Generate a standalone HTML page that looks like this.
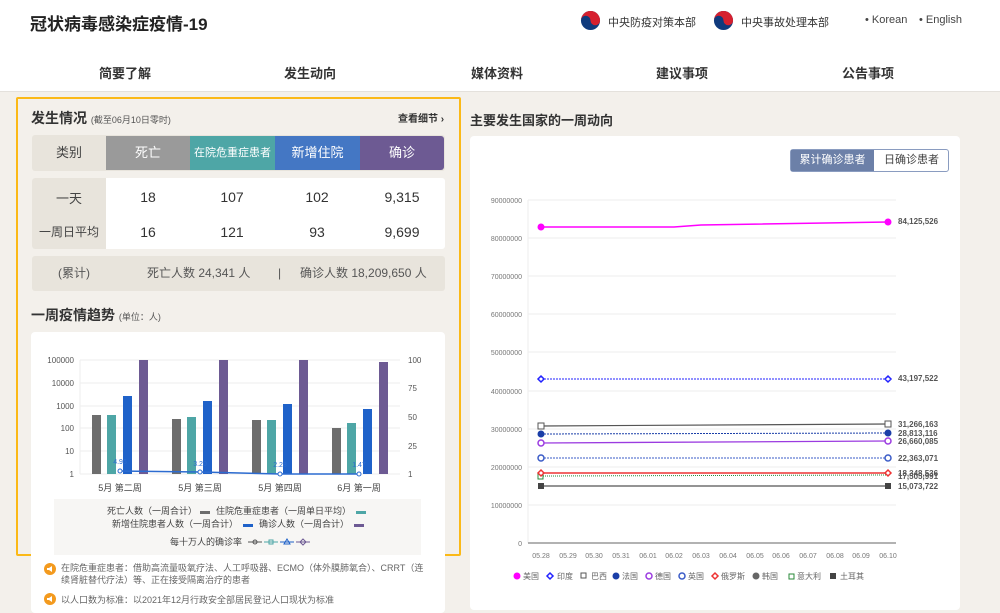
<!DOCTYPE html>
<html><head><meta charset="utf-8"><style>
*{margin:0;padding:0;box-sizing:border-box}
body{width:1000px;height:613px;overflow:hidden;background:#f3f0eb;font-family:"Liberation Sans","Noto Sans CJK SC",sans-serif;color:#333;position:relative}
.a{position:absolute}
.hdr{left:0;top:0;width:1000px;height:92px;background:#fff;border-bottom:1px solid #e4e1dc}
.nav{top:63px;font-size:13px;font-weight:bold;color:#333;transform:translateX(-50%)}
.th{top:136px;height:34px;line-height:34px;text-align:center;color:#fff;font-size:13px}
.num{font-size:14px;text-align:center;width:84px}
</style></head><body>
<div class="a hdr"></div>
<div class="a" style="left:30px;top:10px;font-size:17px;font-weight:bold;color:#222">冠状病毒感染症疫情-19</div>
<svg class="a" style="left:580px;top:10px" width="21" height="21" viewBox="0 0 22 22"><circle cx="11" cy="11" r="10" fill="#0f3a7d"/><path d="M1 11A10 10 0 0 1 21 11A5 5 0 0 1 11 11A5 5 0 0 0 1 11Z" fill="#d6202f"/></svg>
<div class="a" style="left:608px;top:14px;font-size:11px;color:#333">中央防疫对策本部</div>
<svg class="a" style="left:713px;top:10px" width="21" height="21" viewBox="0 0 22 22"><circle cx="11" cy="11" r="10" fill="#0f3a7d"/><path d="M1 11A10 10 0 0 1 21 11A5 5 0 0 1 11 11A5 5 0 0 0 1 11Z" fill="#d6202f"/></svg>
<div class="a" style="left:741px;top:14px;font-size:11px;color:#333">中央事故处理本部</div>
<div class="a" style="left:865px;top:14px;font-size:11px;color:#444">• Korean</div>
<div class="a" style="left:919px;top:14px;font-size:11px;color:#444">• English</div>
<div class="a nav" style="left:125px">简要了解</div>
<div class="a nav" style="left:310px">发生动向</div>
<div class="a nav" style="left:497px">媒体资料</div>
<div class="a nav" style="left:682px">建议事项</div>
<div class="a nav" style="left:868px">公告事项</div>

<div class="a" style="left:16px;top:97px;width:445px;height:459px;border:2px solid #fbb917;border-radius:2px"></div>
<div class="a" style="left:31px;top:108px;font-size:14px;font-weight:bold;color:#333">发生情况 <span style="font-size:9px;font-weight:normal;color:#555">(截至06月10日零时)</span></div>
<div class="a" style="left:398px;top:110px;font-size:10px;font-weight:bold;color:#333">查看细节 ›</div>
<div class="a" style="left:32px;top:135px;width:413px;height:36px;background:#e8e4dc;border-radius:3px"></div>
<div class="a th" style="left:32px;width:74px;color:#444">类别</div>
<div class="a th" style="left:106px;width:84px;background:#9a9a9a">死亡</div>
<div class="a th" style="left:190px;width:85px;background:#4ea6a6;font-size:11px">在院危重症患者</div>
<div class="a th" style="left:275px;width:85px;background:#4477c4">新增住院</div>
<div class="a th" style="left:360px;width:84px;background:#6d5a93;border-radius:0 3px 3px 0">确诊</div>
<div class="a" style="left:32px;top:178px;width:413px;height:71px;background:#fff;border-radius:3px"></div>
<div class="a" style="left:32px;top:178px;width:74px;height:71px;background:#e8e4dc;border-radius:3px 0 0 3px"></div>
<div class="a" style="left:32px;top:188px;width:74px;text-align:center;font-size:13px;color:#444">一天</div>
<div class="a" style="left:32px;top:223px;width:74px;text-align:center;font-size:12px;color:#444">一周日平均</div>
<div class="a num" style="left:106px;top:189px">18</div><div class="a num" style="left:190px;top:189px">107</div><div class="a num" style="left:275px;top:189px">102</div><div class="a num" style="left:360px;top:189px">9,315</div>
<div class="a num" style="left:106px;top:224px">16</div><div class="a num" style="left:190px;top:224px">121</div><div class="a num" style="left:275px;top:224px">93</div><div class="a num" style="left:360px;top:224px">9,699</div>
<div class="a" style="left:32px;top:256px;width:413px;height:35px;background:#e8e4dc;border-radius:3px;font-size:12px;color:#555;line-height:35px"><span class="a" style="left:26px">(累计)</span><span class="a" style="left:115px">死亡人数 24,341 人</span><span class="a" style="left:246px">|</span><span class="a" style="left:268px">确诊人数 18,209,650 人</span></div>
<div class="a" style="left:31px;top:305px;font-size:14px;font-weight:bold;color:#333">一周疫情趋势 <span style="font-size:9px;font-weight:normal;color:#555">(单位：人)</span></div>
<div class="a" style="left:31px;top:332px;width:414px;height:281px;background:#fff;border-radius:4px"></div>
<svg class="a" style="left:0;top:340px" width="470" height="215" viewBox="0 340 470 215" font-family="Liberation Sans" font-size="8" fill="#555">
<g stroke="#eee"><line x1="80" y1="360" x2="400" y2="360"/><line x1="80" y1="383" x2="400" y2="383"/><line x1="80" y1="406" x2="400" y2="406"/><line x1="80" y1="428" x2="400" y2="428"/><line x1="80" y1="451" x2="400" y2="451"/><line x1="80" y1="474" x2="400" y2="474"/><line x1="80" y1="360" x2="80" y2="474"/></g>
<g text-anchor="end"><text x="74" y="363">100000</text><text x="74" y="386">10000</text><text x="74" y="409">1000</text><text x="74" y="431">100</text><text x="74" y="454">10</text><text x="74" y="477">1</text></g>
<g><text x="408" y="363">100</text><text x="408" y="391">75</text><text x="408" y="420">50</text><text x="408" y="449">25</text><text x="408" y="477">1</text></g>
<g fill="#6d6d6d"><rect x="92" y="415" width="9" height="59"/><rect x="172" y="419" width="9" height="55"/><rect x="252" y="420" width="9" height="54"/><rect x="332" y="428" width="9" height="46"/></g>
<g fill="#4ea6a6"><rect x="107" y="415" width="9" height="59"/><rect x="187" y="417" width="9" height="57"/><rect x="267" y="420" width="9" height="54"/><rect x="347" y="423" width="9" height="51"/></g>
<g fill="#1f62c9"><rect x="123" y="396" width="9" height="78"/><rect x="203" y="401" width="9" height="73"/><rect x="283" y="404" width="9" height="70"/><rect x="363" y="409" width="9" height="65"/></g>
<g fill="#6d5a93"><rect x="139" y="360" width="9" height="114"/><rect x="219" y="360" width="9" height="114"/><rect x="299" y="360" width="9" height="114"/><rect x="379" y="362" width="9" height="112"/></g>
<polyline points="120,471 200,472 280,474 359,474" fill="none" stroke="#2c6bd0" stroke-width="1.5"/>
<g fill="#fff" stroke="#2c6bd0"><circle cx="120" cy="471" r="2"/><circle cx="200" cy="472" r="2"/><circle cx="280" cy="474" r="2"/><circle cx="359" cy="474" r="2"/></g>
<g font-size="7" fill="#2c6bd0" text-anchor="middle"><text x="120" y="464">4.96</text><text x="200" y="466">3.20</text><text x="280" y="467">2.28</text><text x="359" y="467">1.47</text></g>
<g font-size="9" fill="#444" text-anchor="middle"><text x="120" y="491">5月 第二周</text><text x="200" y="491">5月 第三周</text><text x="280" y="491">5月 第四周</text><text x="359" y="491">6月 第一周</text></g>
<rect x="54" y="499" width="367" height="56" fill="#f7f6f4"/>
<g font-size="9" fill="#444"><text x="107" y="514">死亡人数（一周合计）</text><rect x="200" y="511" width="10" height="3" fill="#6d6d6d"/><text x="216" y="514">住院危重症患者（一周单日平均）</text><rect x="356" y="511" width="10" height="3" fill="#4ea6a6"/>
<text x="112" y="527">新增住院患者人数（一周合计）</text><rect x="243" y="524" width="10" height="3" fill="#1f62c9"/><text x="259" y="527">确诊人数（一周合计）</text><rect x="354" y="524" width="10" height="3" fill="#6d5a93"/>
<text x="170" y="545">每十万人的确诊率</text></g>
<g fill="none"><line x1="248" y1="542" x2="262" y2="542" stroke="#555"/><circle cx="255" cy="542" r="2" stroke="#555"/><line x1="264" y1="542" x2="278" y2="542" stroke="#4ea6a6"/><rect x="269" y="540" width="4" height="4" stroke="#4ea6a6"/><line x1="280" y1="542" x2="294" y2="542" stroke="#1f62c9"/><path d="M287 539L290 544H284Z" stroke="#1f62c9"/><line x1="296" y1="542" x2="310" y2="542" stroke="#6d5a93"/><path d="M303 539L306 542L303 545L300 542Z" stroke="#6d5a93"/></g>
</svg>
<svg class="a" style="left:44px;top:563px" width="12" height="12"><circle cx="6" cy="6" r="6" fill="#f39a1e"/><path d="M3 5h2l3-2v6l-3-2H3z" fill="#fff"/></svg>
<div class="a" style="left:61px;top:562px;width:370px;font-size:9px;line-height:12px;color:#666">在院危重症患者：借助高流量吸氧疗法、人工呼吸器、ECMO（体外膜肺氧合）、CRRT（连续肾脏替代疗法）等、正在接受隔离治疗的患者</div>
<svg class="a" style="left:44px;top:593px" width="12" height="12"><circle cx="6" cy="6" r="6" fill="#f39a1e"/><path d="M3 5h2l3-2v6l-3-2H3z" fill="#fff"/></svg>
<div class="a" style="left:61px;top:593px;font-size:9px;color:#666">以人口数为标准：以2021年12月行政安全部居民登记人口现状为标准</div>

<div class="a" style="left:470px;top:110px;font-size:13px;font-weight:bold;color:#333">主要发生国家的一周动向</div>
<div class="a" style="left:470px;top:136px;width:490px;height:474px;background:#fff;border-radius:4px"></div>
<div class="a" style="left:790px;top:149px;width:159px;height:23px;border:1px solid #8a9cc0;border-radius:3px;font-size:11px;line-height:21px"><span class="a" style="left:0;width:83px;height:21px;background:#6c80a8;color:#fff;text-align:center">累计确诊患者</span><span class="a" style="left:83px;width:75px;text-align:center;color:#444">日确诊患者</span></div>
<svg class="a" style="left:470px;top:190px" width="490" height="400" viewBox="470 190 490 400" font-family="Liberation Sans" font-size="7" fill="#777">
<g stroke="#eee"><line x1="528" y1="200" x2="896" y2="200"/><line x1="528" y1="238" x2="896" y2="238"/><line x1="528" y1="276" x2="896" y2="276"/><line x1="528" y1="314" x2="896" y2="314"/><line x1="528" y1="352" x2="896" y2="352"/><line x1="528" y1="391" x2="896" y2="391"/><line x1="528" y1="429" x2="896" y2="429"/><line x1="528" y1="467" x2="896" y2="467"/><line x1="528" y1="505" x2="896" y2="505"/><line x1="528" y1="200" x2="528" y2="543"/></g>
<line x1="528" y1="543" x2="896" y2="543" stroke="#999" stroke-width="1.5"/>
<g text-anchor="end"><text x="522" y="203">90000000</text><text x="522" y="241">80000000</text><text x="522" y="279">70000000</text><text x="522" y="317">60000000</text><text x="522" y="355">50000000</text><text x="522" y="394">40000000</text><text x="522" y="432">30000000</text><text x="522" y="470">20000000</text><text x="522" y="508">10000000</text><text x="522" y="546">0</text></g>
<g text-anchor="middle"><text x="541" y="558">05.28</text><text x="568" y="558">05.29</text><text x="594" y="558">05.30</text><text x="621" y="558">05.31</text><text x="648" y="558">06.01</text><text x="674" y="558">06.02</text><text x="701" y="558">06.03</text><text x="728" y="558">06.04</text><text x="755" y="558">06.05</text><text x="781" y="558">06.06</text><text x="808" y="558">06.07</text><text x="835" y="558">06.08</text><text x="861" y="558">06.09</text><text x="888" y="558">06.10</text></g>
<path d="M541 227L674 227L701 225L888 222" stroke="#f0f" stroke-width="1.5" fill="none"/><circle cx="541" cy="227" r="3.5" fill="#f0f"/><circle cx="888" cy="222" r="3.5" fill="#f0f"/>
<line x1="541" y1="379" x2="888" y2="379" stroke="#22f" stroke-dasharray="2 1"/><path d="M541 376L544 379L541 382L538 379Z M888 376L891 379L888 382L885 379Z" fill="#fff" stroke="#22f" stroke-width="1.5"/>
<path d="M541 426L888 424" stroke="#555" stroke-width="1.2"/><rect x="538" y="423" width="6" height="6" fill="#fff" stroke="#555"/><rect x="885" y="421" width="6" height="6" fill="#fff" stroke="#555"/>
<line x1="541" y1="434" x2="888" y2="433" stroke="#1a3ea8" stroke-dasharray="2 1"/><circle cx="541" cy="434" r="3.5" fill="#1a3ea8"/><circle cx="888" cy="433" r="3.5" fill="#1a3ea8"/>
<path d="M541 443L888 441" stroke="#9b3be0" stroke-width="1.3"/><circle cx="541" cy="443" r="3" fill="#fff" stroke="#9b3be0" stroke-width="1.5"/><circle cx="888" cy="441" r="3" fill="#fff" stroke="#9b3be0" stroke-width="1.5"/>
<line x1="541" y1="458" x2="888" y2="458" stroke="#3a5bc7" stroke-dasharray="2 1"/><circle cx="541" cy="458" r="3" fill="#fff" stroke="#3a5bc7" stroke-width="1.5"/><circle cx="888" cy="458" r="3" fill="#fff" stroke="#3a5bc7" stroke-width="1.5"/>
<line x1="541" y1="476" x2="888" y2="475" stroke="#2a8a3a" stroke-dasharray="1 1"/><rect x="538" y="474" width="5" height="5" fill="#fff" stroke="#2a8a3a"/>
<line x1="541" y1="473" x2="888" y2="473" stroke="#e33" stroke-width="1.5"/><path d="M541 470L544 473L541 476L538 473Z M888 470L891 473L888 476L885 473Z" fill="#fff" stroke="#e33" stroke-width="1.5"/>
<line x1="541" y1="486" x2="888" y2="486" stroke="#555" stroke-width="1.2"/><rect x="538" y="483" width="6" height="6" fill="#444"/><rect x="885" y="483" width="6" height="6" fill="#444"/>
<g font-weight="bold" fill="#555" font-size="8"><text x="898" y="224">84,125,526</text><text x="898" y="381">43,197,522</text><text x="898" y="427">31,266,163</text><text x="898" y="436">28,813,116</text><text x="898" y="444">26,660,085</text><text x="898" y="461">22,363,071</text><text x="898" y="476">18,348,536</text><text x="898" y="479">17,505,991</text><text x="898" y="489">15,073,722</text></g>
<g font-size="8" fill="#666"><circle cx="517" cy="576" r="3.5" fill="#f0f"/><text x="523" y="579">美国</text>
<path d="M550 573L553 576L550 579L547 576Z" fill="#fff" stroke="#22f" stroke-width="1.5"/><text x="557" y="579">印度</text>
<rect x="581" y="573" width="5" height="5" fill="#fff" stroke="#555"/><text x="591" y="579">巴西</text>
<circle cx="616" cy="576" r="3.5" fill="#1a3ea8"/><text x="622" y="579">法国</text>
<circle cx="649" cy="576" r="3" fill="#fff" stroke="#9b3be0" stroke-width="1.5"/><text x="655" y="579">德国</text>
<circle cx="682" cy="576" r="3" fill="#fff" stroke="#3a5bc7" stroke-width="1.5"/><text x="688" y="579">英国</text>
<path d="M715 573L718 576L715 579L712 576Z" fill="#fff" stroke="#e33" stroke-width="1.5"/><text x="721" y="579">俄罗斯</text>
<circle cx="756" cy="576" r="3.5" fill="#666"/><text x="762" y="579">韩国</text>
<rect x="789" y="574" width="5" height="5" fill="#fff" stroke="#2a8a3a"/><text x="797" y="579">意大利</text>
<rect x="830" y="573" width="6" height="6" fill="#444"/><text x="840" y="579">土耳其</text></g>
</svg>
</body></html>
